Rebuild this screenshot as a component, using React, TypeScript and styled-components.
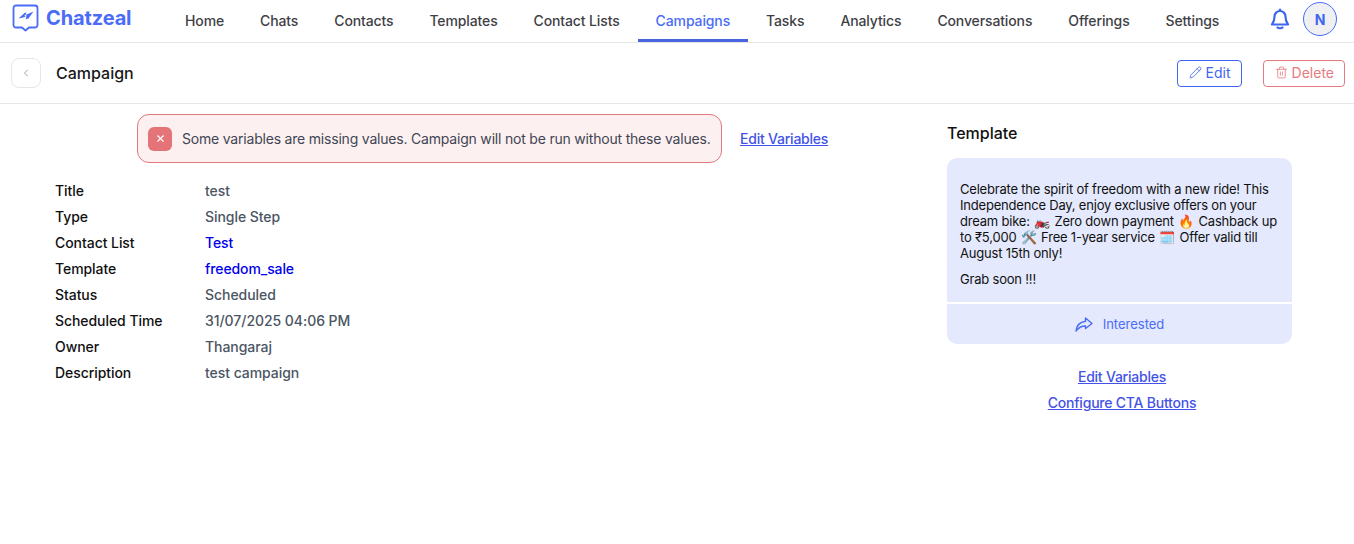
import React from 'react';
import styled, { createGlobalStyle } from 'styled-components';
import { ChevronLeft, Pencil, Trash2, X } from 'lucide-react';

const GlobalStyle = createGlobalStyle`
  html, body {
    margin: 0;
    padding: 0;
    background: #fff;
    font-family: Inter, "Noto Sans", sans-serif;
  }
  * { box-sizing: border-box; }
`;

const Page = styled.div`
  width: 1354px;
  height: 544px;
  overflow: hidden;
  background: #fff;
`;

const TopBar = styled.header`
  display: flex;
  align-items: center;
  height: 43px;
  padding-left: 12px;
  border-bottom: 1px solid #e7e7e9;
`;

const Brand = styled.div`
  display: flex;
  align-items: center;
  gap: 7px;
  width: 155px;
  margin-top: -6px;
  flex: none;
  color: #4a6cf7;
  font-size: 20px;
  font-weight: 700;
  letter-spacing: -0.12px;
`;

const Nav = styled.nav`
  display: flex;
  height: 42px;
`;

const NavItem = styled.a<{ $active?: boolean }>`
  display: flex;
  align-items: center;
  padding: 4px 18px 2px;
  font-size: 14px;
  font-weight: 500;
  letter-spacing: -0.125px;
  white-space: nowrap;
  color: ${p => (p.$active ? '#4a6cf7' : '#3f3f46')};
  border-bottom: 3px solid ${p => (p.$active ? '#4a63e0' : 'transparent')};
`;

const TopRight = styled.div`
  display: flex;
  align-items: center;
  gap: 13px;
  margin-left: auto;
  margin-right: 17px;
  margin-top: -4px;
  color: #3f66f0;
`;

const Avatar = styled.div`
  display: flex;
  align-items: center;
  justify-content: center;
  width: 34px;
  height: 34px;
  border: 1px solid #4a6cf7;
  border-radius: 50%;
  background: #f0f0f3;
  color: #3f66f0;
  font-size: 14px;
  font-weight: 700;
`;

const SubBar = styled.div`
  display: flex;
  align-items: center;
  height: 61px;
  padding: 0 9px 0 11px;
  border-bottom: 1px solid #e7e7e9;
`;

const BackButton = styled.button`
  display: flex;
  align-items: center;
  justify-content: center;
  width: 30px;
  height: 30px;
  padding: 0;
  border: 1px solid #e7e7ea;
  border-radius: 8px;
  background: #fff;
  color: #a0a3ad;
`;

const PageTitle = styled.h1`
  margin: 0 0 0 15px;
  font-size: 16px;
  font-weight: 500;
  color: #18181b;
`;

const Actions = styled.div`
  display: flex;
  gap: 21px;
  margin-left: auto;
`;

const ActionButton = styled.button<{ $danger?: boolean }>`
  display: flex;
  align-items: center;
  gap: 4px;
  height: 27px;
  padding: 0 10px 2px 11px;
  border: 1px solid ${p => (p.$danger ? '#e57b7f' : '#3f66f0')};
  border-radius: 4px;
  background: #fff;
  color: ${p => (p.$danger ? '#e57b7f' : '#3f66f0')};
  font-family: inherit;
  font-size: 14px;
`;

const Main = styled.main`
  display: flex;
`;

const LeftColumn = styled.section`
  width: 947px;
  flex: none;
  padding: 10px 0 0 55px;
`;

const AlertRow = styled.div`
  display: flex;
  align-items: center;
  gap: 18px;
  margin-left: 82px;
`;

const Alert = styled.div`
  display: flex;
  align-items: center;
  gap: 10px;
  width: 585px;
  height: 49px;
  padding: 0 10px;
  border: 1px solid #e2787c;
  border-radius: 12px;
  background: #fdf0f0;
  color: #3f4654;
  font-size: 14px;
  letter-spacing: -0.2px;
  white-space: nowrap;
`;

const AlertIcon = styled.span`
  display: flex;
  flex: none;
  align-items: center;
  justify-content: center;
  width: 24px;
  height: 24px;
  border-radius: 6px;
  background: #e47478;
  color: #fff;
`;

const TextLink = styled.a`
  color: #4353e6;
  font-size: 14px;
  font-weight: 500;
  letter-spacing: -0.22px;
  text-decoration: underline;
  white-space: nowrap;
`;

const Details = styled.dl`
  display: grid;
  grid-template-columns: 150px 1fr;
  grid-auto-rows: 26px;
  align-items: center;
  margin: 14px 0 0;
  font-size: 14px;
`;

const Label = styled.dt`
  font-weight: 500;
  letter-spacing: -0.06px;
  color: #111;
`;

const Value = styled.dd<{ $link?: boolean }>`
  margin: 0;
  font-weight: ${p => (p.$link ? 500 : 450)};
  letter-spacing: ${p => (p.$link ? '-0.1px' : '-0.05px')};
  color: ${p => (p.$link ? '#0000ee' : '#4b5563')};
`;

const RightColumn = styled.aside`
  display: flex;
  flex-direction: column;
  width: 345px;
  flex: none;
  padding-top: 19px;
`;

const SideTitle = styled.h2`
  margin: 0 0 15px;
  font-size: 16px;
  line-height: 20px;
  font-weight: 500;
  color: #111;
`;

const Bubble = styled.div`
  border-radius: 10px;
  background: #e4e9fd;
  overflow: hidden;
`;

const BubbleBody = styled.div`
  padding: 23px 12px 15px 13px;
  border-bottom: 2px solid #fff;
  font-size: 13px;
  line-height: 16px;
  letter-spacing: -0.2px;
  color: #111;
`;

const BubbleText = styled.p`
  margin: 0 0 10px;
  &:last-child { margin-bottom: 0; }
`;

const CtaRow = styled.div`
  display: flex;
  align-items: center;
  justify-content: center;
  gap: 10px;
  height: 40px;
  color: #4a6cf7;
  font-size: 13px;
`;

const SideLinks = styled.div`
  display: flex;
  flex-direction: column;
  align-items: center;
  gap: 9px;
  margin-top: 24px;
  padding-left: 5px;
`;

const Logo = () => (
  <svg width="27" height="28" viewBox="0 0 27 28" fill="none">
    <path d="M4 1.500h19a2.500 2.500 0 0 1 2.500 2.500v17a2.500 2.500 0 0 1-2.500 2.500h-6l-3.500 3-3.500-3H4A2.500 2.500 0 0 1 1.500 21V4A2.500 2.500 0 0 1 4 1.500z" stroke="#4a6cf7" strokeWidth="1.800" strokeLinejoin="round" />
    <path d="M6.500 14.500l6-5.500 2-.5-1 2.500 8-3.500-5 7-3 .8 1-2.500z" fill="#4a6cf7" />
    <circle cx="13.500" cy="11.800" r="0.900" fill="#fff" />
  </svg>
);

const Bell = () => (
  <svg width="20" height="22" viewBox="0 0 20 22" fill="none" stroke="#3f66f0" strokeWidth="2.200" strokeLinejoin="round" strokeLinecap="round">
    <path d="M10 3a5.500 5.500 0 0 0-5.500 5.500c0 4-1 6-2.500 8h16c-1.500-2-2.500-4-2.500-8A5.500 5.500 0 0 0 10 3z" />
    <path d="M10 1.500V3M7.500 19.500c.8 1 4.200 1 5 0" />
  </svg>
);

const ShareArrow = () => (
  <svg width="18" height="15" viewBox="0 0 18 15" fill="none" stroke="#4a6cf7" strokeWidth="1.400" strokeLinejoin="round">
    <path d="M10.500 1L17 6.500 10.500 11.500V9C6.500 9 3.500 10.500 1 14 1.500 9 5 5 10.500 4.200z" />
  </svg>
);

const navItems = ['Home', 'Chats', 'Contacts', 'Templates', 'Contact Lists', 'Campaigns', 'Tasks', 'Analytics', 'Conversations', 'Offerings', 'Settings'];

// one string on purpose, hair spaces give the emoji the gap they have in the template preview
const templateBody = 'Celebrate the spirit of freedom with a new ride! This Independence Day, enjoy exclusive offers on your dream bike: \u200a🏍️\u200a Zero down payment \u200a🔥\u200a Cashback up to ₹5,000 \u200a🛠️\u200a Free 1-year service \u200a🗓️\u200a Offer valid till August 15th only!';

const App: React.FC = () => (
  <Page>
    <GlobalStyle />
    <TopBar>
      <Brand><Logo />Chatzeal</Brand>
      <Nav>
        {navItems.map(n => <NavItem key={n} $active={n === 'Campaigns'}>{n}</NavItem>)}
      </Nav>
      <TopRight>
        <Bell />
        <Avatar>N</Avatar>
      </TopRight>
    </TopBar>
    <SubBar>
      <BackButton><ChevronLeft size={12} /></BackButton>
      <PageTitle>Campaign</PageTitle>
      <Actions>
        <ActionButton><Pencil size={13} strokeWidth={1.500} />Edit</ActionButton>
        <ActionButton $danger><Trash2 size={13} strokeWidth={1.500} />Delete</ActionButton>
      </Actions>
    </SubBar>
    <Main>
      <LeftColumn>
        <AlertRow>
          <Alert>
            <AlertIcon><X size={11} strokeWidth={2.500} /></AlertIcon>
            Some variables are missing values. Campaign will not be run without these values.
          </Alert>
          <TextLink>Edit Variables</TextLink>
        </AlertRow>
        <Details>
          <Label>Title</Label><Value>test</Value>
          <Label>Type</Label><Value>Single Step</Value>
          <Label>Contact List</Label><Value $link>Test</Value>
          <Label>Template</Label><Value $link>freedom_sale</Value>
          <Label>Status</Label><Value>Scheduled</Value>
          <Label>Scheduled Time</Label><Value>31/07/2025 04:06 PM</Value>
          <Label>Owner</Label><Value>Thangaraj</Value>
          <Label>Description</Label><Value>test campaign</Value>
        </Details>
      </LeftColumn>
      <RightColumn>
        <SideTitle>Template</SideTitle>
        <Bubble>
          <BubbleBody>
            <BubbleText>{templateBody}</BubbleText>
            <BubbleText>Grab soon !!!</BubbleText>
          </BubbleBody>
          <CtaRow><ShareArrow />Interested</CtaRow>
        </Bubble>
        <SideLinks>
          <TextLink>Edit Variables</TextLink>
          <TextLink>Configure CTA Buttons</TextLink>
        </SideLinks>
      </RightColumn>
    </Main>
  </Page>
);

export default App;
